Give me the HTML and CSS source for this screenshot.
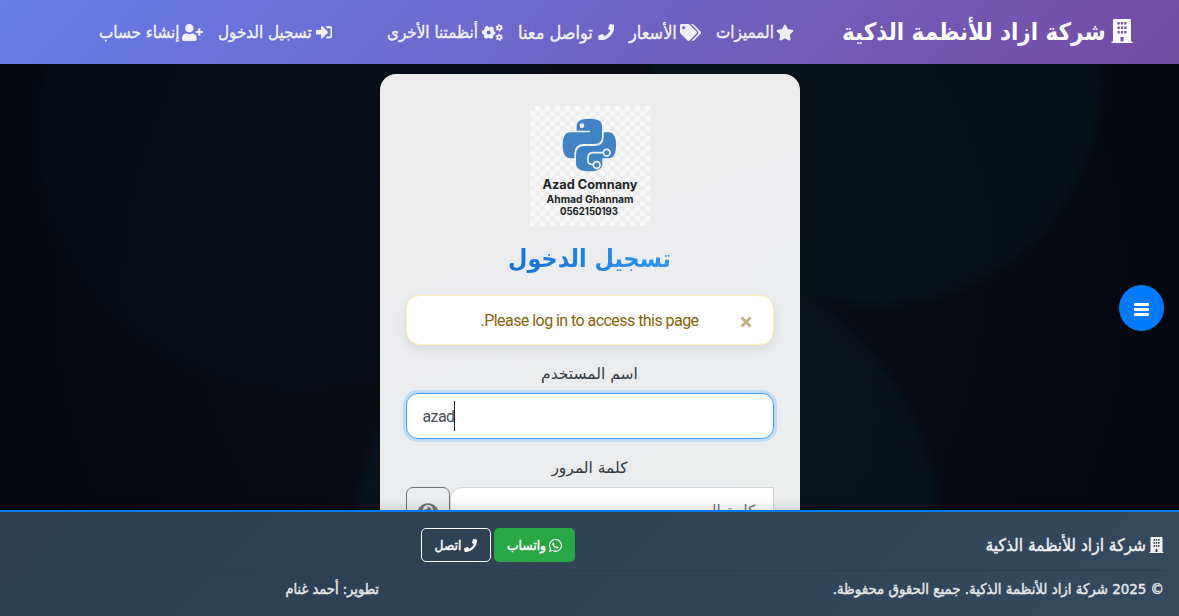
FILE: index.html
```html
<!DOCTYPE html>
<html lang="ar" dir="rtl">
<head>
<meta charset="utf-8">
<title>تسجيل الدخول</title>
<link rel="stylesheet" href="styles.css">
</head>
<body>
<svg class="defs" width="0" height="0">
  <symbol id="building" viewBox="0 0 448 512"><path fill-rule="evenodd" d="M436 480h-20V24c0-13-11-24-24-24H56C43 0 32 11 32 24v456H12c-7 0-12 5-12 12v20h448v-20c0-7-5-12-12-12zM128 64h48v52h-48zM200 64h48v52h-48zM272 64h48v52h-48zM128 160h48v52h-48zM200 160h48v52h-48zM272 160h48v52h-48zM128 256h48v52h-48zM200 256h48v52h-48zM272 256h48v52h-48zM192 384h64v96h-64z"/></symbol>
  <symbol id="phone" viewBox="0 0 512 512"><path d="M493.4 24.6l-104-24c-11.3-2.6-22.9 3.3-27.5 13.9l-48 112c-4.2 9.8-1.4 21.3 6.9 28l60.6 49.6c-36 76.7-98.9 140.5-177.2 177.2l-49.6-60.6c-6.8-8.3-18.2-11.1-28-6.9l-112 48C3.9 366.5-2 378.1.6 389.4l24 104C27.1 504.2 36.7 512 48 512c256.1 0 464-207.5 464-464 0-11.2-7.7-20.9-18.6-23.4z"/></symbol>
</svg>

<header class="navbar">
  <a class="brand"><svg class="brand-icon"><use href="#building"/></svg><span>شركة ازاد للأنظمة الذكية</span></a>
  <nav class="links">
    <a class="link features"><svg class="i18" viewBox="0 0 576 512"><path d="M259.3 17.8L194 150.2 47.9 171.5c-26.2 3.8-36.7 36.1-17.7 54.6l105.7 103-25 145.5c-4.5 26.3 23.2 46 46.4 33.7L288 439.6l130.7 68.7c23.2 12.2 50.9-7.4 46.4-33.7l-25-145.5 105.7-103c19-18.5 8.5-50.8-17.7-54.6L382 150.2 316.7 17.8c-11.7-23.6-45.6-23.9-57.4 0z"/></svg><span>المميزات</span></a>
    <a class="link prices"><svg class="i20" viewBox="0 0 640 512"><path d="M497.941 225.941L286.059 14.059A48 48 0 0 0 252.118 0H48C21.49 0 0 21.49 0 48v204.118a48 48 0 0 0 14.059 33.941l211.882 211.882c18.744 18.745 49.136 18.746 67.882 0l204.118-204.118c18.745-18.745 18.745-49.137 0-67.882zM112 160c-26.51 0-48-21.49-48-48s21.49-48 48-48 48 21.49 48 48-21.49 48-48 48zm513.941 133.823L421.823 497.941c-18.745 18.745-49.137 18.745-67.882 0l-.36-.36L527.64 323.522c16.999-16.999 26.36-39.6 26.36-63.64s-9.362-46.641-26.36-63.64L331.397 0h48.721a48 48 0 0 1 33.941 14.059l211.882 211.882c18.745 18.745 18.745 49.137 0 67.882z"/></svg><span class="wide">الأسعار</span></a>
    <a class="link contact"><svg class="i16"><use href="#phone"/></svg><span class="wide">تواصل معنا</span></a>
    <a class="link systems"><svg class="i20" viewBox="0 0 640 512"><g fill="none" stroke="currentColor"><circle cx="205" cy="256" r="115" stroke-width="106"/><circle cx="205" cy="256" r="178" stroke-width="54" stroke-dasharray="106 80.400" stroke-dashoffset="53"/><circle cx="525" cy="112" r="58" stroke-width="52"/><circle cx="525" cy="112" r="92" stroke-width="36" stroke-dasharray="54 42.300"/><circle cx="525" cy="400" r="58" stroke-width="52"/><circle cx="525" cy="400" r="92" stroke-width="36" stroke-dasharray="54 42.300"/></g></svg><span>أنظمتنا الأخرى</span></a>
  </nav>
  <nav class="links account">
    <a class="link login"><svg class="i16" viewBox="0 0 512 512"><path d="M416 448h-84c-6.6 0-12-5.4-12-12v-40c0-6.600 5.400-12 12-12h84c17.700 0 32-14.300 32-32V160c0-17.700-14.300-32-32-32h-84c-6.600 0-12-5.400-12-12V76c0-6.600 5.400-12 12-12h84c53 0 96 43 96 96v192c0 53-43 96-96 96zm-47-209L201 71c-15-15-41-4.500-41 17v96H24c-13.300 0-24 10.700-24 24v96c0 13.300 10.700 24 24 24h136v96c0 21.500 26 32 41 17l168-168c9.300-9.400 9.300-24.600 0-34z"/></svg><span>تسجيل الدخول</span></a>
    <a class="link register"><svg class="i20" viewBox="0 0 640 512"><path d="M624 208h-64v-64c0-8.800-7.200-16-16-16h-32c-8.800 0-16 7.200-16 16v64h-64c-8.800 0-16 7.200-16 16v32c0 8.800 7.200 16 16 16h64v64c0 8.800 7.200 16 16 16h32c8.800 0 16-7.200 16-16v-64h64c8.800 0 16-7.200 16-16v-32c0-8.800-7.200-16-16-16zm-400 48c70.700 0 128-57.300 128-128S294.700 0 224 0 96 57.300 96 128s57.300 128 128 128zm89.600 32h-16.700c-22.200 10.200-46.900 16-72.900 16s-50.600-5.800-72.900-16h-16.700C60.200 288 0 348.200 0 422.400V464c0 26.500 21.500 48 48 48h352c26.500 0 48-21.500 48-48v-41.600c0-74.200-60.200-134.400-134.400-134.400z"/></svg><span>إنشاء حساب</span></a>
  </nav>
</header>

<main class="page">
  <section class="card">
    <svg class="logo" viewBox="0 0 120 120">
      <defs><pattern id="checks" width="10" height="10" patternUnits="userSpaceOnUse"><path fill="#eeeeee" d="M0 0h5v5H0zM5 5h5v5H5z"/></pattern></defs>
      <rect width="120" height="120" fill="#f7f7f7"/><rect width="120" height="120" fill="url(#checks)"/>
      <g transform="scale(.33333)">
        <path fill="#3f82c6" d="M140 74V60Q140 38 178 38Q216 38 216 60V92Q216 114 192 114H162Q133 114 133 143V157H122Q98 157 98 118Q98 79 122 79H180V74ZM221 79H236Q258 79 258 118Q258 157 236 157H217V173Q217 196 178 196Q138 196 138 172V146Q138 120 164 120H194Q221 120 221 94Z"/>
        <circle cx="156" cy="59" r="7" fill="#f4f4f4"/>
        <path fill="none" stroke="#f4f4f4" stroke-width="5" d="M220 140H190Q174 140 174 154V165Q174 175 190 176"/>
        <g fill="#3f82c6" stroke="#f4f4f4" stroke-width="5"><circle cx="230" cy="140" r="10"/><circle cx="200" cy="177" r="10"/></g>
      </g>
      <g class="logo-text" direction="ltr" text-anchor="middle">
        <text x="60" y="83" font-size="12.500" textLength="95" lengthAdjust="spacingAndGlyphs">Azad Comnany</text>
        <text x="60" y="97" font-size="10.500" textLength="87" lengthAdjust="spacingAndGlyphs">Ahmad Ghannam</text>
        <text x="59" y="108.500" font-size="10" textLength="58" lengthAdjust="spacingAndGlyphs">0562150193</text>
      </g>
    </svg>
    <h1 class="title">تسجيل الدخول</h1>
    <div class="alert"><span class="close"><svg viewBox="0 0 12 12"><path d="M1.500 1.500l9 9M10.500 1.500l-9 9"/></svg></span><span class="message">Please log in to access this page.</span></div>
    <div class="label">اسم المستخدم</div>
    <div class="field"><span>azad</span><i class="caret"></i></div>
    <div class="label">كلمة المرور</div>
    <div class="group">
      <div class="password">كلمة المرور</div>
      <div class="eye"><svg viewBox="0 0 576 512"><path d="M572.52 241.4C518.29 135.59 410.93 64 288 64S57.68 135.64 3.48 241.41a32.35 32.35 0 0 0 0 29.19C57.71 376.41 165.07 448 288 448s230.32-71.64 284.52-177.41a32.35 32.35 0 0 0 0-29.19zM288 400a144 144 0 1 1 144-144 143.93 143.93 0 0 1-144 144zm0-240a95.31 95.31 0 0 0-25.31 3.79 47.85 47.85 0 0 1-66.9 66.9A95.78 95.78 0 1 0 288 160z"/></svg></div>
    </div>
  </section>
</main>

<footer class="footer">
  <div class="top-row">
    <div class="company"><svg><use href="#building"/></svg><span>شركة ازاد للأنظمة الذكية</span></div>
    <div class="buttons">
      <a class="btn whatsapp"><svg viewBox="0 32 448 448"><path d="M380.9 97.1C339 55.1 283.2 32 223.9 32c-122.4 0-222 99.6-222 222 0 39.1 10.2 77.3 29.6 111L0 480l117.7-30.9c32.4 17.7 68.9 27 106.1 27h.1c122.3 0 224.1-99.6 224.1-222 0-59.3-25.2-115-67.1-157zm-157 341.6c-33.2 0-65.7-8.9-94-25.7l-6.7-4-69.8 18.3L72 359.2l-4.4-7c-18.5-29.4-28.2-63.3-28.2-98.2 0-101.7 82.8-184.5 184.6-184.5 49.3 0 95.6 19.2 130.4 54.1 34.8 34.9 56.2 81.2 56.1 130.5 0 101.8-84.9 184.6-186.6 184.6zm101.2-138.2c-5.5-2.8-32.8-16.2-37.9-18-5.1-1.9-8.8-2.8-12.5 2.8-3.7 5.6-14.3 18-17.6 21.8-3.2 3.7-6.5 4.2-12 1.4-32.6-16.3-54-29.1-75.500-66-5.700-9.800 5.700-9.100 16.300-30.300 1.800-3.700.9-6.900-.5-9.700-1.400-2.800-12.500-30.100-17.100-41.200-4.500-10.800-9.100-9.300-12.500-9.500-3.200-.2-6.900-.2-10.600-.2-3.700 0-9.700 1.400-14.800 6.900-5.100 5.600-19.400 19-19.400 46.300 0 27.300 19.900 53.700 22.600 57.400 2.800 3.700 39.100 59.700 94.800 83.800 35.200 15.200 49 16.500 66.600 13.900 10.700-1.600 32.800-13.400 37.400-26.400 4.600-13 4.600-24.100 3.200-26.400-1.300-2.500-5-3.900-10.500-6.600z"/></svg><span>واتساب</span></a>
      <a class="btn call"><svg><use href="#phone"/></svg><span>اتصل</span></a>
    </div>
  </div>
  <div class="bottom-row"><span class="copyright">© 2025 شركة ازاد للأنظمة الذكية. جميع الحقوق محفوظة.</span><span class="developer">تطوير: أحمد غنام</span></div>
</footer>

<button class="menu" aria-label="القائمة"><i></i><i></i><i></i></button>
</body>
</html>
```
FILE: styles.css
```css
* { box-sizing: border-box; }
body {
  margin: 0;
  height: 616px;
  display: flex;
  flex-direction: column;
  overflow: hidden;
  font-family: "DejaVu Sans Condensed", "DejaVu Sans", sans-serif;
  background: #05080f;
}
svg { display: block; fill: currentColor; flex: none; }
.defs { position: absolute; }

.navbar {
  height: 64px;
  flex: none;
  display: flex;
  align-items: center;
  padding-right: 46px;
  background: linear-gradient(135deg, #667eea, #764ba2);
  color: #fff;
  white-space: nowrap;
}
.brand { width: 291px; display: flex; align-items: center; justify-content: space-between; font-size: 23.9px; font-weight: bold; }
.brand-icon { width: 22px; height: 24px; margin-bottom: 2px; }
.brand span { line-height: 60px; padding-bottom: 1px; }
.links { display: flex; gap: 15px; margin-right: 48px; color: rgba(255, 255, 255, .9); font-size: 16.900px; }
.account { margin-right: 55px; }
.link { display: flex; align-items: center; justify-content: space-between; height: 64px; -webkit-text-stroke: .4px; }
.wide { font-size: 18px; }
.features { width: 78px; }
.prices { width: 72px; }
.contact { width: 96px; }
.systems { width: 116px; }
.login { width: 114px; }
.register { width: 104px; }
.i16 { width: 16.500px; height: 16.500px; }
.i18 { width: 18px; height: 17px; }
.i20 { width: 21px; height: 17px; }

.page {
  flex: 1;
  min-height: 0;
  overflow: hidden;
  display: flex;
  justify-content: center;
  padding-top: 10px;
  background:
    radial-gradient(circle 264px at 292px 66px, rgba(8, 20, 34, .3) 0, rgba(8, 20, 34, .3) 94%, transparent 100%),
    radial-gradient(circle 232px at 876px 16px, rgba(7, 32, 36, .38) 0, rgba(7, 32, 36, .38) 94%, transparent 100%),
    radial-gradient(circle 298px at 648px 476px, rgba(12, 36, 50, .38) 0, rgba(12, 34, 48, .34) 96%, transparent 100%),
    radial-gradient(circle 640px at 50% 50%, #0b0d16, #080b12 50%, #04070e);
}
.card {
  width: 420px;
  height: 560px;
  flex: none;
  padding: 32px 26px;
  border-radius: 16px;
  background: linear-gradient(160deg, #ececec, #ebecee 50%, #ebeceb);
  color: #343a40;
  text-align: center;
}
.logo { width: 120px; height: 120px; margin: 0 auto; }
.logo-text { font-family: Inter, sans-serif; font-weight: 700; fill: #202326; }
.title {
  margin: 9px auto 0;
  width: 170px;
  height: 60px;
  line-height: 48px;
  font-size: 24.900px;
  font-weight: bold;
  white-space: nowrap;
  background: linear-gradient(to left, #2e98f8, #0f71d5);
  -webkit-background-clip: text;
  color: transparent;
}
.alert {
  height: 50px;
  display: flex;
  align-items: center;
  padding-right: 21px;
  border: 1px solid #ffeeba;
  border-radius: 14px;
  background: #fff;
  box-shadow: 0 4px 12px rgba(0, 0, 0, .09);
  color: #856404;
  font: 16px Roboto, sans-serif;
  letter-spacing: -.55px;
}
.close { width: 12px; margin-top: 4px; opacity: .5; }
.close svg { width: 12px; stroke: currentColor; stroke-width: 2.800; }
.message { margin-right: 41px; }
.label { height: 48px; padding-top: 10px; font: 15.500px/38px "DejaVu Sans", sans-serif; }
.field {
  height: 46px;
  direction: ltr;
  display: flex;
  align-items: center;
  padding-left: 16px;
  border: 1px solid #3da0f7;
  border-radius: 12px;
  background: #fff;
  box-shadow: 0 0 0 3px #bfdaf4;
  color: #495057;
  font: 16px Roboto, sans-serif;
  letter-spacing: -.6px;
}
.caret { width: 1px; height: 30px; background: #212529; }
.group { display: flex; height: 46px; }
.password {
  flex: 1;
  padding-right: 17px;
  border: 1px solid #ced4da;
  border-top-left-radius: 12px;
  background: #fff;
  color: #6c757d;
  font: 15.500px/46px "DejaVu Sans", sans-serif;
  text-align: right;
}
.eye { width: 44px; border: 1px solid #6c757d; border-radius: 7px 7px 0 0; color: #6c757d; }
.eye svg { width: 20px; height: 18px; margin: 13px auto; }

.footer {
  position: relative;
  flex: none;
  height: 106px;
  padding: 0 15px;
  border-top: 2px solid #007bff;
  background: linear-gradient(135deg, #2c3e50, #34495e);
  box-shadow: 0 -2px 10px rgba(0, 0, 0, .14);
  color: #fff;
  white-space: nowrap;
}
.top-row { height: 59px; display: flex; border-bottom: 1px solid #2d3e4e; }
.company { width: 589px; height: 66px; display: flex; align-items: center; gap: 3px; color: #f0f1f2; font-size: 17.200px; -webkit-text-stroke: .4px; }
.company svg { width: 15px; height: 16px; }
.buttons { display: flex; gap: 3px; padding-top: 16px; }
.btn { height: 34px; display: flex; align-items: center; justify-content: center; gap: 3px; border-radius: 5px; font-size: 13.700px; -webkit-text-stroke: .4px; }
.btn span { padding-bottom: 1px; }
.btn svg { width: 13px; height: 13px; }
.whatsapp { width: 81px; background: #28a745; }
.call { width: 70px; border: 1px solid #fff; }
.bottom-row { display: flex; height: 35px; align-items: center; color: #e7e9eb; font-size: 14.900px; -webkit-text-stroke: .4px; }
.copyright { width: 785px; }
.developer { font-size: 14.500px; padding-top: 1px; }

.menu {
  position: fixed;
  right: 15px;
  top: 285px;
  width: 45px;
  height: 46px;
  border: 0;
  border-radius: 50%;
  padding: 2px 0 0;
  display: flex;
  flex-direction: column;
  align-items: center;
  justify-content: center;
  gap: 2px;
  background: #007bff;
}
.menu i { width: 15px; height: 3px; border-radius: 1px; background: #fff; }
```
